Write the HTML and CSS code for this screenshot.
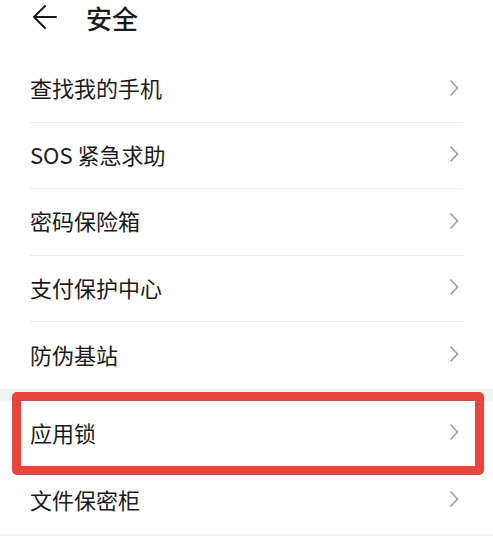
FILE: index.html
```html
<!DOCTYPE html>
<html lang="zh">
<head>
<meta charset="utf-8">
<link rel="stylesheet" href="styles.css">
</head>
<body>
<div class="page">
  <header class="topbar">
    <svg class="back" width="26" height="26" viewBox="0 0 26 26"><path d="M24 13H2M13 2L2 13l11 11" fill="none" stroke="#1a1a1a" stroke-width="2" stroke-linecap="round" stroke-linejoin="round"/></svg>
    <h1 class="title">安全</h1>
  </header>
  <ul class="group">
    <li class="row"><span>查找我的手机</span><svg class="chev" width="10" height="18" viewBox="0 0 10 18"><path d="M1.5 1.5L8.5 9l-7 7.5" fill="none" stroke="#a3a3a3" stroke-width="1.8"/></svg></li>
    <li class="row"><span>SOS 紧急求助</span><svg class="chev" width="10" height="18" viewBox="0 0 10 18"><path d="M1.5 1.5L8.5 9l-7 7.5" fill="none" stroke="#a3a3a3" stroke-width="1.8"/></svg></li>
    <li class="row"><span>密码保险箱</span><svg class="chev" width="10" height="18" viewBox="0 0 10 18"><path d="M1.5 1.5L8.5 9l-7 7.5" fill="none" stroke="#a3a3a3" stroke-width="1.8"/></svg></li>
    <li class="row"><span>支付保护中心</span><svg class="chev" width="10" height="18" viewBox="0 0 10 18"><path d="M1.5 1.5L8.5 9l-7 7.5" fill="none" stroke="#a3a3a3" stroke-width="1.8"/></svg></li>
    <li class="row last"><span>防伪基站</span><svg class="chev" width="10" height="18" viewBox="0 0 10 18"><path d="M1.5 1.5L8.5 9l-7 7.5" fill="none" stroke="#a3a3a3" stroke-width="1.8"/></svg></li>
  </ul>
  <div class="gap"></div>
  <ul class="group">
    <li class="row"><span>应用锁</span><svg class="chev" width="10" height="18" viewBox="0 0 10 18"><path d="M1.5 1.5L8.5 9l-7 7.5" fill="none" stroke="#a3a3a3" stroke-width="1.8"/></svg></li>
    <li class="row last"><span>文件保密柜</span><svg class="chev" width="10" height="18" viewBox="0 0 10 18"><path d="M1.5 1.5L8.5 9l-7 7.5" fill="none" stroke="#a3a3a3" stroke-width="1.8"/></svg></li>
  </ul>
  <div class="gap"></div>
  <div class="highlight"></div>
</div>
</body>
</html>
```

FILE: styles.css
```css
html, body {
  margin: 0;
  padding: 0;
  background: #ffffff;
}
body {
  font-family: "Noto Sans CJK SC", "Noto Sans", sans-serif;
  color: #1a1a1a;
}
.page {
  position: relative;
  width: 493px;
  height: 536px;
  overflow: hidden;
}
.topbar {
  height: 56px;
  display: flex;
  align-items: flex-start;
}
.back {
  margin-left: 32px;
  margin-top: 4px;
}
.title {
  margin: 0 0 0 28px;
  font-size: 26px;
  font-weight: 500;
  line-height: 36px;
}
.group {
  list-style: none;
  margin: 0;
  padding: 0 30px;
}
.row {
  height: 66.5px;
  box-sizing: border-box;
  display: flex;
  align-items: center;
  justify-content: space-between;
  border-bottom: 1px solid #ebebeb;
  font-size: 22px;
  line-height: 1;
}
.row span {
  margin-bottom: 3px;
}
.row.last {
  border-bottom: none;
}
.chev {
  margin-right: 4px;
  margin-bottom: 2px;
}
.gap {
  height: 12px;
  background: #f3f3f3;
}
.highlight {
  position: absolute;
  left: 12px;
  top: 392px;
  width: 472px;
  height: 83px;
  box-sizing: border-box;
  border: 9px solid #e8453c;
  border-radius: 5px;
}
```
